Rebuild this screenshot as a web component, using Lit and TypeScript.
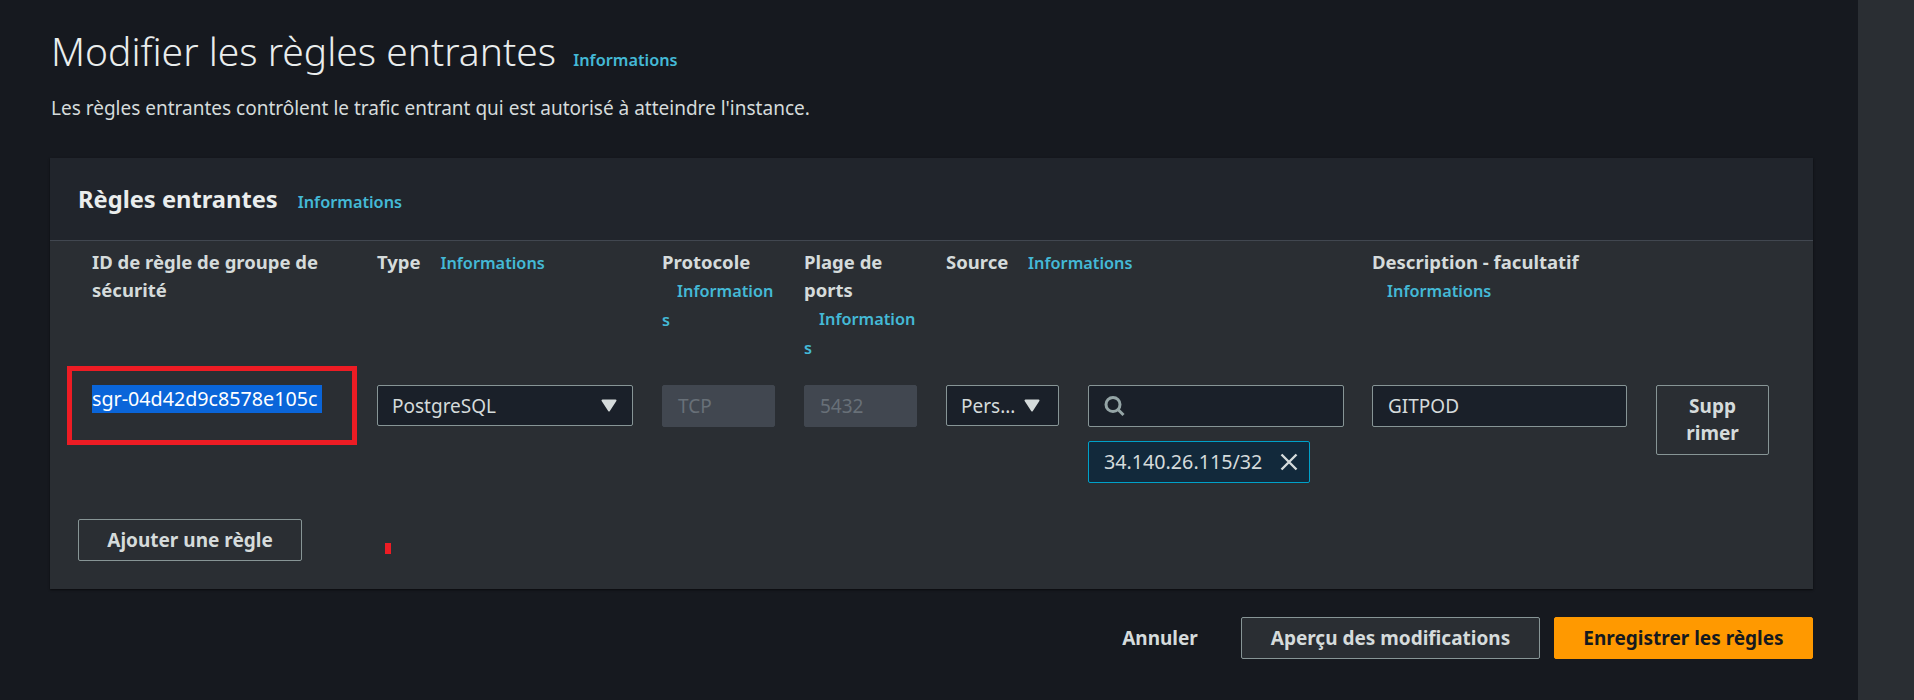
import { LitElement, html, css } from 'lit';
import { customElement } from 'lit/decorators.js';

@customElement('app-root')
export class AppRoot extends LitElement {
  static styles = css`
    :host {
      display: flex;
      height: 700px;
      overflow: hidden;
      background: #16191f;
      color: #d5dbdb;
      font-family: 'Noto Sans', sans-serif;
      font-size: 19px;
      line-height: 28px;
    }
    .main { flex: 1; padding: 29px 45px 0 50px; min-width: 0; }
    .scrollbar { width: 56px; background: #2a2e33; }

    .info { color: #44b9d6; font-size: 16.3px; font-weight: 600; margin-left: 15px; overflow-wrap: anywhere; }

    h1 { margin: 0; padding-left: 1px; font-size: 39px; line-height: 44px; font-weight: 350; color: #eaeded; }
    h1 .info { margin-left: 7px; }
    .intro { margin: 12px 0 36px 1px; color: #d5dbdb; }

    .panel { background: #2a2e33; box-shadow: 0 1px 2px rgba(0, 0, 0, 0.6); position: relative; }
    .panel-head { height: 83px; box-sizing: border-box; padding: 27px 28px 0; background: #21252c; border-bottom: 1px solid #414750; }
    h2 { margin: 0; display: inline; font-size: 23.7px; font-weight: 700; color: #eaeded; }

    .grid {
      display: grid;
      grid-template-columns: 285px 285px 142px 142px 142px 284px 284px 142px;
      padding: 7px 0 0 42px;
    }
    .th { font-size: 18.5px; font-weight: 700; padding-right: 29px; color: #d5dbdb; margin-bottom: 23px; }
    .th.wide { grid-column: span 2; }
    .th.desc { grid-column: span 2; padding-right: 200px; }
    .cell { padding-right: 29px; min-width: 0; }
    .cell.tight { padding-right: 28px; }

    .selected { display: inline-block; background: #0a65d9; color: #fff; padding-right: 5px; font-size: 19.7px; }

    .control {
      box-sizing: border-box;
      display: flex;
      align-items: center;
      height: 42px;
      background: #1a2029;
      border: 1px solid #879596;
      border-radius: 2px;
      padding: 0 15px;
    }
    .select { justify-content: space-between; height: 41px; padding-left: 14px; }
    .select.small { padding: 0 18px 0 14px; }
    .caret { flex: none; display: block; }
    .disabled { background: #414750; border-color: #414750; color: #687078; }
    .search { padding-left: 14px; }

    .chip {
      box-sizing: border-box;
      display: flex;
      align-items: center;
      justify-content: space-between;
      width: 222px;
      height: 42px;
      margin-top: 14px;
      padding: 0 11px 0 15px;
      background: #12293b;
      border: 1px solid #00a1c9;
      border-radius: 2px;
      font-size: 19.7px;
    }

    button {
      font: inherit;
      font-weight: 700;
      color: #d5dbdb;
      background: transparent;
      border: 1px solid #879596;
      border-radius: 2px;
      box-sizing: border-box;
      padding: 0;
      cursor: pointer;
    }
    .remove { display: block; width: 113px; height: 70px; line-height: 27px; padding: 0 26px; }

    .add-row { padding: 36px 0 28px 28px; }
    .add { display: block; width: 224px; height: 42px; }

    .actions { display: flex; justify-content: flex-end; align-items: center; margin-top: 28px; }
    .actions button { height: 42px; }
    .cancel { border: none; width: 76px; margin-right: 43px; }
    .preview { width: 299px; margin-right: 14px; background: #2a2e33; }
    .save { width: 259px; background: #ff9900; border-color: #ff9900; color: #16191f; }

    .annotation { position: absolute; left: 17px; top: 208px; width: 290px; height: 79px; box-sizing: border-box; border: 5px solid #ed1c24; }
    .tick { position: absolute; left: 335px; top: 385px; width: 6px; height: 11px; background: #ed1c24; }
  `;

  private caret() {
    return html`<svg class="caret" width="16" height="13" viewBox="0 0 16 13"><path d="M1.5 1.5h13L8 11.5z" fill="#d5dbdb" stroke="#d5dbdb" stroke-width="2" stroke-linejoin="round"/></svg>`;
  }

  render() {
    return html`
      <div class="main">
        <h1>Modifier les règles entrantes <span class="info">Informations</span></h1>
        <p class="intro">Les règles entrantes contrôlent le trafic entrant qui est autorisé à atteindre l'instance.</p>

        <section class="panel">
          <div class="panel-head"><h2>Règles entrantes</h2> <span class="info">Informations</span></div>
          <div class="grid">
            <div class="th">ID de règle de groupe de sécurité</div>
            <div class="th">Type <span class="info">Informations</span></div>
            <div class="th">Protocole <span class="info">Informations</span></div>
            <div class="th">Plage de ports <span class="info">Informations</span></div>
            <div class="th wide">Source <span class="info">Informations</span></div>
            <div class="th desc">Description - facultatif <span class="info">Informations</span></div>

            <div class="cell"><span class="selected">sgr-04d42d9c8578e105c</span></div>
            <div class="cell">
              <div class="control select"><span>PostgreSQL</span>${this.caret()}</div>
            </div>
            <div class="cell"><div class="control disabled">TCP</div></div>
            <div class="cell"><div class="control disabled">5432</div></div>
            <div class="cell">
              <div class="control select small"><span>Pers...</span>${this.caret()}</div>
            </div>
            <div class="cell tight">
              <div class="control search">
                <svg width="22" height="22" viewBox="0 0 22 22" fill="none" stroke="#95a5a6" stroke-width="3">
                  <circle cx="10" cy="9.5" r="7"/>
                  <path d="M15 14.5l5.5 5.5"/>
                </svg>
              </div>
              <div class="chip">
                <span>34.140.26.115/32</span>
                <svg width="18" height="18" viewBox="0 0 18 18" fill="none" stroke="#d5dbdb" stroke-width="2.4">
                  <path d="M1.5 1.5l15 15M16.5 1.5l-15 15"/>
                </svg>
              </div>
            </div>
            <div class="cell"><div class="control">GITPOD</div></div>
            <div class="cell"><button class="remove">Supp<wbr>rimer</button></div>
          </div>
          <div class="add-row"><button class="add">Ajouter une règle</button></div>
          <div class="annotation"></div>
          <div class="tick"></div>
        </section>

        <div class="actions">
          <button class="cancel">Annuler</button>
          <button class="preview">Aperçu des modifications</button>
          <button class="save">Enregistrer les règles</button>
        </div>
      </div>
      <div class="scrollbar"></div>
    `;
  }
}

declare global {
  interface HTMLElementTagNameMap { 'app-root': AppRoot; }
}
